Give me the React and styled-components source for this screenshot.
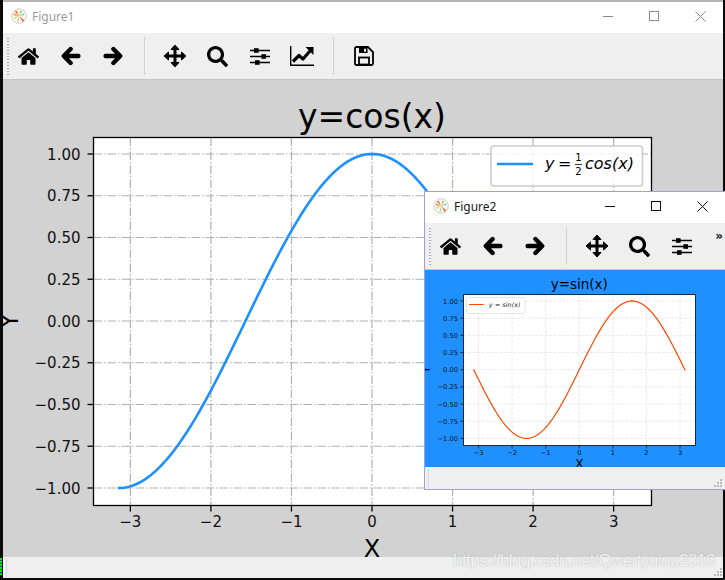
import React from "react";
import styled, { createGlobalStyle } from "styled-components";
import { FaHome, FaSearch } from "react-icons/fa";

const GlobalStyle = createGlobalStyle`
  html, body { margin: 0; padding: 0; background: #000; }
  body { width: 725px; height: 580px; overflow: hidden; font-family: "Noto Sans", "Liberation Sans", sans-serif; }
`;

const Desktop = styled.div`
  position: relative;
  width: 725px;
  height: 580px;
  padding: 0 2px 2px 3px;
  box-sizing: border-box;
  overflow: hidden;
  background: #0a0a0a;
`;

const MainWindow = styled.section`
  display: flex;
  flex-direction: column;
  height: 578px;
  border-top: 2px solid #b4b4b4;
  box-sizing: border-box;
  background: #fff;
`;

const FloatingWindow = styled.section`
  position: absolute;
  left: 424px;
  top: 191px;
  width: 302px;
  height: 299px;
  box-sizing: border-box;
  display: flex;
  flex-direction: column;
  border: 1px solid #a39ecf;
  background: #fff;
`;

const TitleBar = styled.header`
  display: flex;
  align-items: center;
  flex: 0 0 31px;
  box-sizing: border-box;
  padding: 0 0 3px 8px;
  background: #fff;
`;

const TitleText = styled.span`
  margin-left: 5px;
  font-size: 12px;
  color: ${(p) => (p.$active ? "#1a1a1a" : "#9a9a9a")};
`;

const Controls = styled.div`
  display: flex;
  margin-left: auto;
`;

const ControlButton = styled.button`
  display: flex;
  align-items: center;
  justify-content: center;
  width: 46px;
  height: 28px;
  padding: 0;
  border: none;
  background: none;
  color: ${(p) => (p.$active ? "#111" : "#8c8c8c")};
`;

const Toolbar = styled.div`
  display: flex;
  align-items: center;
  flex: 0 0 47px;
  box-sizing: border-box;
  gap: 4.5px;
  padding-left: 4px;
  background: #efefef;
  border-bottom: 1px solid #c6c6c6;
  overflow: hidden;
`;

const Handle = styled.div`
  flex: 0 0 2px;
  height: 39px;
  margin-right: -4.5px;
  background-image: radial-gradient(circle, #a8a8a8 0.8px, transparent 0.9px);
  background-size: 2px 3px;
`;

const ToolButton = styled.button`
  display: flex;
  align-items: center;
  justify-content: center;
  flex: 0 0 38px;
  height: 38px;
  padding: 0;
  border: none;
  background: none;
  color: #000;
`;

const ToolSeparator = styled.div`
  flex: 0 0 1px;
  height: 38px;
  margin: 0 6.5px 0 7px;
  background: #d2d2d2;
`;

const Overflow = styled.span`
  align-self: flex-start;
  margin: 7px 2px 0 auto;
  font: bold 12px "DejaVu Sans", sans-serif;
  line-height: 12px;
  color: #111;
`;

const Canvas = styled.div`
  flex: 1;
  min-height: 0;
  overflow: hidden;
  background: ${(p) => p.$bg};
  svg { display: block; width: 100%; height: 100%; }
`;

const StatusBar = styled.footer`
  position: relative;
  flex: 0 0 ${(p) => p.$height}px;
  background: #efefef;
  &::before {
    content: "";
    position: absolute;
    left: 3px;
    top: 2px;
    bottom: 1px;
    width: 1px;
    background: #d6d6d6;
  }
`;

const GripWrap = styled.span`
  position: absolute;
  right: ${(p) => p.$right}px;
  bottom: 1px;
  display: flex;
`;

const Watermark = styled.div`
  position: absolute;
  left: 453px;
  top: 551px;
  font: 17px "Liberation Sans", Arial, sans-serif;
  letter-spacing: -0.53px;
  color: rgba(255, 255, 255, 0.85);
  text-shadow: 0 0 1.5px rgba(150, 150, 150, 0.8);
  white-space: nowrap;
`;

const GreenMark = styled.div`
  position: absolute;
  left: 0;
  top: 558px;
  width: 2px;
  height: 17px;
  background: repeating-linear-gradient(to bottom, #19e019 0 2px, #063 2px 3px);
`;

const AppLogo = () => (
  <svg width="16" height="16" viewBox="0 0 16 16">
    <circle cx="8" cy="8" r="7.3" fill="#fbfbf7" stroke="#cfcfc8" />
    <path d="M8 8 L3 5 L2.6 7.4 Z" fill="#e8a33a" />
    <path d="M8 8 L2.8 9.4 L4 11 Z" fill="#e2c94a" />
    <path d="M8 8 L5.6 2.4 L3.8 3.6 Z" fill="#ef6a2a" />
    <path d="M8 8 L11.4 3.2 L9.6 2.6 Z" fill="#9cc66c" />
    <path d="M8 8 L13.4 7 L13 5.2 Z" fill="#7fc7a0" />
    <path d="M8 8 L13.4 12.6 L11.6 13.8 Z" fill="#e8692c" />
    <path d="M8 8 L8 13.6 L6.4 13.2 Z" fill="#a8d28a" />
  </svg>
);

const MinimizeIcon = () => (
  <svg width="10" height="10" viewBox="0 0 10 10"><path d="M0 5.5H10" stroke="currentColor" /></svg>
);
const MaximizeIcon = () => (
  <svg width="10" height="10" viewBox="0 0 10 10"><rect x=".5" y=".5" width="9" height="9" fill="none" stroke="currentColor" /></svg>
);
const CloseIcon = () => (
  <svg width="11" height="11" viewBox="0 0 11 11"><path d="M.5 .5L10.5 10.5M10.5 .5L.5 10.5" stroke="currentColor" /></svg>
);

const ArrowIcon = ({ flip }) => (
  <svg width="20" height="20" viewBox="0 0 20 20" style={flip ? { transform: "scaleX(-1)" } : undefined}>
    <path d="M9.6 3L2.8 10L9.6 17M3.4 10H17.4" fill="none" stroke="#000" strokeWidth="4.4" strokeLinecap="round" strokeLinejoin="round" />
  </svg>
);

const MoveIcon = () => (
  <svg width="24" height="24" viewBox="0 0 24 24">
    <path d="M12 4V20M4 12H20" stroke="#000" strokeWidth="3" />
    <path d="M12 1L16 5.5H8ZM12 23L16 18.5H8ZM1 12L5.5 8V16ZM23 12L18.5 8V16Z" fill="#000" stroke="#000" strokeWidth="1" strokeLinejoin="round" />
  </svg>
);

const SlidersIcon = () => (
  <svg width="20" height="17" viewBox="0 0 20 17">
    <path d="M0 2.5H20M0 8.5H20M0 14.5H20" stroke="#000" strokeWidth="1.4" />
    <rect x="4" y="0.2" width="4.6" height="4.6" fill="#000" />
    <rect x="11.4" y="6.2" width="4.6" height="4.6" fill="#000" />
    <rect x="5" y="12.2" width="4.6" height="4.6" fill="#000" />
  </svg>
);

const ChartIcon = () => (
  <svg width="24" height="20" viewBox="0 0 24 20">
    <path d="M.7 0V19.2H24" fill="none" stroke="#000" strokeWidth="1.4" />
    <path d="M3 15.5L9 9.5L13 13L20 5" fill="none" stroke="#000" strokeWidth="3.2" strokeLinejoin="round" />
    <path d="M15.5 1H23.5V9Z" fill="#000" />
  </svg>
);

const SaveIcon = () => (
  <svg width="20" height="20" viewBox="0 0 20 20">
    <path d="M2.5 1H14L19 6V17.5Q19 19 17.5 19H2.5Q1 19 1 17.5V2.5Q1 1 2.5 1Z" fill="none" stroke="#000" strokeWidth="1.8" />
    <path d="M5 1.5H13.5V7H5Z M10 2.8V5.8H12V2.8Z" fill="#000" fillRule="evenodd" />
    <rect x="5" y="11.5" width="10" height="7" fill="none" stroke="#000" strokeWidth="1.8" />
  </svg>
);

const Grip = () => (
  <svg width="9" height="9" viewBox="0 0 9 9" fill="#b9b9b9">
    <rect x="6" y="0" width="2" height="2" />
    <rect x="3" y="3" width="2" height="2" />
    <rect x="6" y="3" width="2" height="2" />
    <rect x="0" y="6" width="2" height="2" />
    <rect x="3" y="6" width="2" height="2" />
    <rect x="6" y="6" width="2" height="2" />
  </svg>
);

const TOOL_GROUPS = [
  [<FaHome key="h" size={21} />, <ArrowIcon key="l" />, <ArrowIcon key="r" flip />],
  [<MoveIcon key="m" />, <FaSearch key="s" size={21} />, <SlidersIcon key="o" />, <ChartIcon key="c" />],
  [<SaveIcon key="v" />],
];

function Tools({ collapsed }) {
  const groups = collapsed ? [TOOL_GROUPS[0], TOOL_GROUPS[1].slice(0, 3)] : TOOL_GROUPS;
  return (
    <Toolbar>
      <Handle />
      {groups.map((group, i) => (
        <React.Fragment key={i}>
          {i > 0 && <ToolSeparator />}
          {group.map((icon) => <ToolButton key={icon.key}>{icon}</ToolButton>)}
        </React.Fragment>
      ))}
      {collapsed && <Overflow>»</Overflow>}
    </Toolbar>
  );
}

function Titlebar({ name, active }) {
  return (
    <TitleBar>
      <AppLogo />
      <TitleText $active={active}>{name}</TitleText>
      <Controls>
        <ControlButton $active={active}><MinimizeIcon /></ControlButton>
        <ControlButton $active={active}><MaximizeIcon /></ControlButton>
        <ControlButton $active={active}><CloseIcon /></ControlButton>
      </Controls>
    </TitleBar>
  );
}

const fmtY = (v) => v.toFixed(2).replace("-", "\u2212");
const fmtX = (v) => String(v).replace("-", "\u2212");
const X_TICKS = [-3, -2, -1, 0, 1, 2, 3];
const Y_TICKS = [1, 0.75, 0.5, 0.25, 0, -0.25, -0.5, -0.75, -1];
const FONT = '"DejaVu Sans", sans-serif';

function Plot({ view, box, x0, xUnit, y0, yUnit, fn, line, lineWidth, grid, gridDash, gridWidth, tick, tickSize, tickGap, tickBase, xBase, axisWidth, axisColor, title, titleSize, titleBase, xLabel, yLabel, labelSize, children }) {
  const sx = (v) => x0 + v * xUnit;
  const sy = (v) => y0 - v * yUnit;
  const pts = [];
  for (let i = 0; i <= 200; i++) {
    const v = -Math.PI + (i / 100) * Math.PI;
    pts.push(`${sx(v).toFixed(2)},${sy(fn(v)).toFixed(2)}`);
  }
  return (
    <svg viewBox={view.join(" ")} fontFamily={FONT}>
      <rect x={box[0]} y={box[1]} width={box[2] - box[0]} height={box[3] - box[1]} fill="#fff" />
      {X_TICKS.map((v) => (
        <path key={v} d={`M${sx(v)} ${box[1]}V${box[3]}`} stroke={grid} strokeWidth={gridWidth} strokeDasharray={gridDash} />
      ))}
      {Y_TICKS.map((v) => (
        <path key={v} d={`M${box[0]} ${sy(v)}H${box[2]}`} stroke={grid} strokeWidth={gridWidth} strokeDasharray={gridDash} />
      ))}
      <polyline points={pts.join(" ")} fill="none" stroke={line} strokeWidth={lineWidth} strokeLinecap="square" />
      <rect x={box[0]} y={box[1]} width={box[2] - box[0]} height={box[3] - box[1]} fill="none" stroke={axisColor} strokeWidth={axisWidth} />
      {X_TICKS.map((v) => (
        <g key={v}>
          <path d={`M${sx(v)} ${box[3]}v${tickSize}`} stroke={axisColor} strokeWidth={axisWidth} />
          <text x={sx(v)} y={xBase} fontSize={tick} textAnchor="middle" fill="#111">{fmtX(v)}</text>
        </g>
      ))}
      {Y_TICKS.map((v) => (
        <g key={v}>
          <path d={`M${box[0]} ${sy(v)}h${-tickSize}`} stroke={axisColor} strokeWidth={axisWidth} />
          <text x={box[0] - tickGap} y={sy(v) + tickBase} fontSize={tick} textAnchor="end" fill="#111">{fmtY(v)}</text>
        </g>
      ))}
      <text x={x0} y={titleBase} fontSize={titleSize} textAnchor="middle" fill="#000">{title}</text>
      <text x={x0} y={xLabel.y} fontSize={labelSize} textAnchor="middle" fill="#000">X</text>
      <text transform={`translate(${yLabel.x} ${y0}) rotate(-90)`} fontSize={labelSize} textAnchor="middle" fill="#000">Y</text>
      {children}
    </svg>
  );
}

const CosLegend = () => (
  <g>
    <rect x="491" y="146" width="151.5" height="40" rx="3" fill="#fff" fillOpacity="0.85" stroke="#ccc" strokeWidth="1.6" />
    <path d="M497 164H533" stroke="#1e90ff" strokeWidth="2.6" />
    <text x="545" y="169" fontSize="16" fill="#000" fontStyle="italic">y</text>
    <text x="558" y="169" fontSize="16" fill="#000">=</text>
    <text x="578.5" y="161" fontSize="10" fill="#000" textAnchor="middle">1</text>
    <path d="M575 164.5H582" stroke="#000" strokeWidth="0.8" />
    <text x="578.5" y="175" fontSize="10" fill="#000" textAnchor="middle">2</text>
    <text x="585" y="169" fontSize="16" fill="#000" fontStyle="italic">cos(x)</text>
  </g>
);

const SinLegend = () => (
  <g>
    <rect x="466.5" y="297.5" width="58.5" height="16" rx="1.5" fill="#fff" stroke="#ddd" strokeWidth="0.8" />
    <path d="M469 304.5H483.5" stroke="#ff4500" strokeWidth="1" />
    <text x="489" y="306.8" fontSize="6.2" fill="#222" fontStyle="italic" letterSpacing="0.15">y = sin(x)</text>
  </g>
);

export default function App() {
  return (
    <>
      <GlobalStyle />
      <Desktop>
        <MainWindow>
          <Titlebar name="Figure1" />
          <Tools />
          <Canvas $bg="#d2d2d2">
            <Plot
              view={[3, 80, 720, 477]}
              box={[93.5, 137.5, 651.5, 505.5]}
              x0={372} xUnit={80.55} y0={321} yUnit={167}
              fn={Math.cos} line="#1e90ff" lineWidth={2.6}
              grid="#b0b0b0" gridDash="8.5 2 1.5 2" gridWidth={1.2}
              tick={15} tickSize={6} tickGap={13} tickBase={5.5} xBase={527}
              axisWidth={1.3} axisColor="#000"
              title="y=cos(x)" titleSize={33} titleBase={128}
              xLabel={{ y: 557 }} yLabel={{ x: 18 }} labelSize={24}
            >
              <CosLegend />
            </Plot>
          </Canvas>
          <StatusBar $height={21}>
            <GripWrap $right={0}><Grip /></GripWrap>
          </StatusBar>
        </MainWindow>
        <GreenMark />
        <FloatingWindow>
          <Titlebar name="Figure2" active />
          <Tools collapsed />
          <Canvas $bg="#1e90ff">
            <Plot
              view={[425, 270, 300, 197]}
              box={[463.5, 294.5, 695.5, 445.5]}
              x0={579.3} xUnit={33.6} y0={369.7} yUnit={68.7}
              fn={Math.sin} line="#ff4500" lineWidth={1.2}
              grid="#e4e4e4" gridDash="3 1.5" gridWidth={0.8}
              tick={6.7} tickSize={3} tickGap={5.5} tickBase={2.5} xBase={455}
              axisWidth={1} axisColor="#1c2a3a"
              title="y=sin(x)" titleSize={13.5} titleBase={289}
              xLabel={{ y: 467.5 }} yLabel={{ x: 430 }} labelSize={12}
            >
              <SinLegend />
            </Plot>
          </Canvas>
          <StatusBar $height={22}>
            <GripWrap $right={2}><Grip /></GripWrap>
          </StatusBar>
        </FloatingWindow>
        <Watermark>https://blog.csdn.net/Qwertyuiop2016</Watermark>
      </Desktop>
    </>
  );
}
